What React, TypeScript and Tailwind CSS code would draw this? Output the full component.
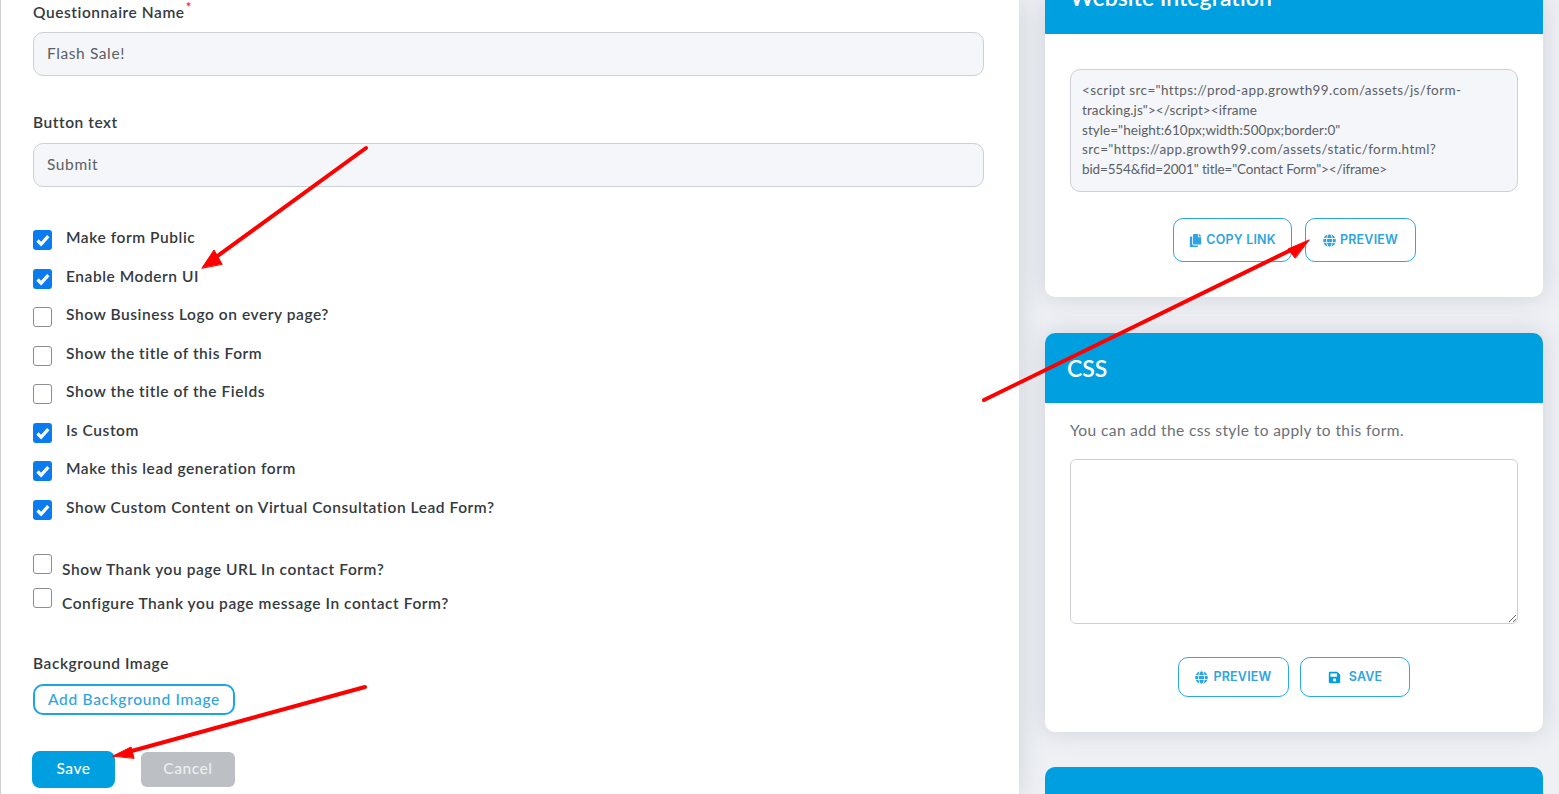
import { ReactNode } from 'react';
import { FaCopy, FaGlobe, FaSave } from 'react-icons/fa';

const checks = [
  { label: 'Make form Public', on: true },
  { label: 'Enable Modern UI', on: true },
  { label: 'Show Business Logo on every page?', on: false },
  { label: 'Show the title of this Form', on: false },
  { label: 'Show the title of the Fields', on: false },
  { label: 'Is Custom', on: true },
  { label: 'Make this lead generation form', on: true },
  { label: 'Show Custom Content on Virtual Consultation Lead Form?', on: true },
];

const Box = ({ on }: { on: boolean }) =>
  on ? (
    <span className="flex h-[20px] w-[19px] shrink-0 items-center justify-center rounded-[3px] bg-[#0b7cf0]">
      <svg viewBox="0 0 16 16" className="h-[16px] w-[16px]" fill="none" stroke="#fff" strokeWidth="3.2">
        <path d="M2.5 8.5l3.6 3.6 7.2-8" />
      </svg>
    </span>
  ) : (
    <span className="h-[20px] w-[19px] shrink-0 rounded-[3px] border border-[#8a8d91] bg-white" />
  );

const OutlineButton = ({ icon, children, className }: { icon: ReactNode; children: ReactNode; className: string }) => (
  <button className={`flex items-center justify-center rounded-[10px] border border-[#27aae6] bg-white font-['Inter',sans-serif] text-[12.5px] font-semibold tracking-[0.2px] text-[#2fa4e0] ${className}`}>
    {icon}
    {children}
  </button>
);

export default function App() {
  return (
    <div className="flex h-[794px] w-[1559px] overflow-hidden bg-[#eef0f4] font-['Lato',sans-serif] text-[15.5px] tracking-[0.56px] text-[#343a40]">
      {/* form column */}
      <div className="h-[794px] w-[1019px] shrink-0 border-l border-[#d0d2d6] bg-white pl-[32px] pr-[35px] shadow-[0_0_24px_rgba(80,90,120,0.2)]">
        <div className="flex h-[32px] items-start pt-[3px] font-semibold leading-[18px]">
          Questionnaire Name
          <span className="ml-[1px] mt-[-2px] text-[13px] leading-[12px] text-[#f0183c]">*</span>
        </div>
        <div className="flex h-[44px] items-center rounded-[10px] border border-[#cdd0d4] bg-[#f4f6f9] pb-[1px] pl-[13px] tracking-[0.6px] text-[#5b6066]">
          Flash Sale!
        </div>
        <div className="flex h-[67px] items-end pb-[12px] font-semibold leading-[18px]">Button text</div>
        <div className="flex h-[44px] items-center rounded-[10px] border border-[#cdd0d4] bg-[#f4f6f9] pb-[1px] pl-[13px] tracking-[0.6px] text-[#5b6066]">
          Submit
        </div>

        <div className="mt-[34px] flex flex-col">
          {checks.map((c) => (
            <div key={c.label} className="flex h-[38.5px] items-center">
              <Box on={c.on} />
              <span className="ml-[14px] mt-[-4.5px] whitespace-nowrap font-semibold">{c.label}</span>
            </div>
          ))}
        </div>

        <div className="mt-[25px] flex h-[34px] items-start">
          <Box on={false} />
          <span className="ml-[10px] mt-[4px] whitespace-nowrap font-semibold">Show Thank you page URL In contact Form?</span>
        </div>
        <div className="flex h-[34px] items-start">
          <Box on={false} />
          <span className="ml-[10px] mt-[4px] whitespace-nowrap font-semibold">Configure Thank you page message In contact Form?</span>
        </div>

        <div className="mt-[31px] font-semibold leading-[20px]">Background Image</div>
        <button className="mt-[11px] block h-[31px] w-[202px] rounded-[10px] border-2 border-[#1ba5e3] bg-white pb-[2px] text-center font-medium leading-[24px] tracking-[0.7px] text-[#2fa4e0]">
          Add Background Image
        </button>
        <div className="ml-[-1px] mt-[36px] flex items-center">
          <button className="h-[37px] w-[83px] rounded-[8px] bg-[#009fe0] pb-[1px] text-center font-medium text-white">Save</button>
          <button className="ml-[26px] h-[35px] w-[94px] rounded-[6px] bg-[#bcbfc3] pb-[1px] text-center font-medium text-[#eceef0]">Cancel</button>
        </div>
      </div>

      {/* side column */}
      <div className="ml-[26px] flex w-[498px] shrink-0 flex-col">
        <div className="shrink-0 rounded-b-[10px] bg-white shadow-[0_0_24px_rgba(80,90,120,0.2)]">
          <div className="flex h-[34px] items-end overflow-hidden bg-[#009fe0] pl-[25px]">
            <span className="mb-[24px] whitespace-nowrap text-[23px] font-semibold leading-[26px] tracking-normal text-white">Website Integration</span>
          </div>
          <div className="mx-[25px] mt-[35px] h-[123px] rounded-[10px] border border-[#cdd0d4] bg-[#f4f6f9] px-[11px] pt-[11px] text-[13.5px] leading-[19.8px] text-[#5b6066]">
            <div className="whitespace-nowrap tracking-[0.4px]">&lt;script src="https://prod-app.growth99.com/assets/js/form-</div>
            <div className="whitespace-nowrap tracking-[0.1px]">tracking.js"&gt;&lt;/script&gt;&lt;iframe</div>
            <div className="whitespace-nowrap tracking-[0.05px]">style="height:610px;width:500px;border:0"</div>
            <div className="whitespace-nowrap tracking-[0.4px]">src="https://app.growth99.com/assets/static/form.html?</div>
            <div className="whitespace-nowrap tracking-[-0.14px]">bid=554&amp;fid=2001" title="Contact Form"&gt;&lt;/iframe&gt;</div>
          </div>
          <div className="mt-[26px] flex h-[79px] items-start pl-[128px]">
            <OutlineButton icon={<FaCopy className="mr-[4px] h-[13px] w-[13px]" />} className="h-[44px] w-[119px]">COPY LINK</OutlineButton>
            <OutlineButton icon={<FaGlobe className="mr-[4px] h-[13px] w-[13px]" />} className="ml-[13px] h-[44px] w-[111px]">PREVIEW</OutlineButton>
          </div>
        </div>

        <div className="mt-[36px] h-[399px] shrink-0 rounded-[10px] bg-white shadow-[0_0_24px_rgba(80,90,120,0.2)]">
          <div className="flex h-[70px] items-center rounded-t-[10px] bg-[#009fe0] pl-[22px] text-[23px] font-semibold tracking-normal text-white">CSS</div>
          <div className="mt-[17px] pl-[25px] leading-[20px] tracking-[0.4px] text-[#6b7076]">You can add the css style to apply to this form.</div>
          <textarea className="mx-[25px] mt-[19px] block h-[165px] w-[448px] rounded-[6px] border border-[#cdd0d4] bg-white" />
          <div className="mt-[33px] flex pl-[133px]">
            <OutlineButton icon={<FaGlobe className="mr-[5px] h-[13px] w-[13px]" />} className="h-[40px] w-[111px]">PREVIEW</OutlineButton>
            <OutlineButton icon={<FaSave className="mr-[8px] h-[13px] w-[13px] text-[#009fe0]" />} className="ml-[11px] h-[40px] w-[110px]">SAVE</OutlineButton>
          </div>
        </div>

        <div className="mt-[35px] h-[60px] shrink-0 rounded-t-[10px] bg-[#009fe0]" />
      </div>

      {/* annotation arrows drawn over the page */}
      <svg className="pointer-events-none absolute left-0 top-0" width="1559" height="794" fill="#ff0000" stroke="#ff0000" strokeWidth="4" strokeLinecap="round">
        <path d="M366 148L212 260" fill="none" />
        <path d="M202 268L214 250L222 264Z" strokeWidth="1" />
        <path d="M984 400L1295 248" fill="none" />
        <path d="M1309 240L1288 249L1295 258Z" strokeWidth="1" />
        <path d="M365 687L128 752" fill="none" />
        <path d="M113 756L131 747L134 758Z" strokeWidth="1" />
      </svg>
    </div>
  );
}
